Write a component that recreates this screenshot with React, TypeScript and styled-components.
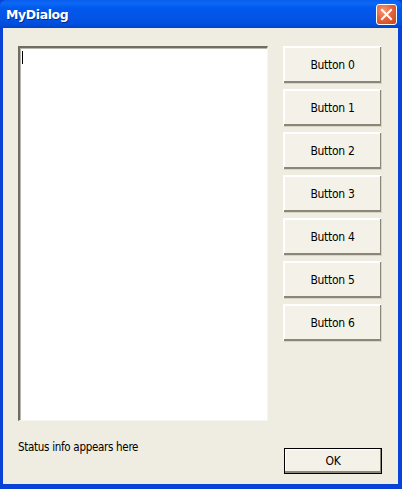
import React from "react";
import styled, { createGlobalStyle } from "styled-components";

const GlobalStyle = createGlobalStyle`
  html, body {
    margin: 0;
    padding: 0;
    background: #ffffff;
  }
  body {
    font-family: Tahoma, "DejaVu Sans", "Liberation Sans", sans-serif;
  }
`;

const Window = styled.div`
  width: 402px;
  height: 489px;
  display: flex;
  flex-direction: column;
  background: #0842d6;
  box-sizing: border-box;
`;

const TitleBar = styled.div`
  height: 28px;
  flex: none;
  display: flex;
  align-items: center;
  justify-content: space-between;
  padding: 0 5px 0 6px;
  box-sizing: border-box;
  background: linear-gradient(
    to bottom,
    #0a5cf0 0%,
    #0a6af4 12%,
    #0058ee 30%,
    #0454e6 60%,
    #0050df 85%,
    #0142c8 100%
  );
  border-radius: 6px 6px 0 0;
`;

const Title = styled.span`
  color: #ffffff;
  font-family: "DejaVu Sans", Verdana, sans-serif;
  font-weight: bold;
  font-size: 12.5px;
  letter-spacing: -0.4px;
  text-shadow: 1px 1px 0 #0a2a8a;
`;

const CloseButton = styled.div`
  width: 21px;
  height: 21px;
  box-sizing: border-box;
  border: 1px solid #ffffff;
  border-radius: 3px;
  background: radial-gradient(circle at 35% 30%, #f39a7c 0%, #e6643c 45%, #c9421c 100%);
  display: flex;
  align-items: center;
  justify-content: center;
`;

const Frame = styled.div`
  flex: 1;
  display: flex;
  padding: 0 4px 5px 3px;
  background: #0842d6;
`;

const Client = styled.div`
  flex: 1;
  background: #efece1;
  display: grid;
  grid-template-columns: 250px 99px;
  grid-template-rows: 375px 1fr;
  column-gap: 15px;
  padding: 18px 16px 0 15px;
`;

const TextArea = styled.div`
  box-sizing: border-box;
  background: #ffffff;
  border-top: 2px solid #6f6c62;
  border-left: 2px solid #6f6c62;
  border-right: 1px solid #f6f5f0;
  border-bottom: 1px solid #f6f5f0;
  box-shadow: inset 1px 1px 0 #b9b7ad;
  position: relative;
`;

const Caret = styled.div`
  position: absolute;
  left: 2px;
  top: 3px;
  width: 1px;
  height: 13px;
  background: #000000;
`;

const ButtonColumn = styled.div`
  display: flex;
  flex-direction: column;
  gap: 5px;
`;

const Button = styled.div<{ $default?: boolean }>`
  box-sizing: border-box;
  height: ${({ $default }) => ($default ? "26px" : "38px")};
  background: #f4f2e8;
  border: 1px solid ${({ $default }) => ($default ? "#000000" : "#d8d5c6")};
  border-top-color: ${({ $default }) => ($default ? "#000000" : "#ffffff")};
  border-left-color: ${({ $default }) => ($default ? "#000000" : "#ffffff")};
  box-shadow: inset -1px -2px 0 #8a8778, inset 1px 1px 0 #ffffff;
  display: flex;
  align-items: center;
  justify-content: center;
  font-family: Tahoma, "DejaVu Sans Condensed", "DejaVu Sans", sans-serif;
  font-size: 12px;
  color: #000000;
  letter-spacing: -0.3px;
`;

const Footer = styled.div`
  display: flex;
  align-items: flex-start;
  padding-top: 19px;
  font-family: Tahoma, "DejaVu Sans Condensed", "DejaVu Sans", sans-serif;
  font-size: 11.5px;
  letter-spacing: -0.3px;
  color: #000000;
`;

const FooterRight = styled.div`
  display: flex;
  align-items: flex-start;
  padding-top: 27px;
`;

const OkWrap = styled.div`
  width: 98px;
  margin-left: 1px;
`;

export default function App() {
  const labels = [0, 1, 2, 3, 4, 5, 6].map((n) => `Button ${n}`);
  return (
    <>
      <GlobalStyle />
      <Window>
        <TitleBar>
          <Title>MyDialog</Title>
          <CloseButton>
            <svg width="13" height="13" viewBox="0 0 13 13">
              <path d="M2 2 L11 11 M11 2 L2 11" stroke="#ffffff" strokeWidth="2" strokeLinecap="square" />
            </svg>
          </CloseButton>
        </TitleBar>
        <Frame>
          <Client>
            <TextArea>
              <Caret />
            </TextArea>
            <ButtonColumn>
              {labels.map((l) => (
                <Button key={l}>{l}</Button>
              ))}
            </ButtonColumn>
            <Footer>Status info appears here</Footer>
            <FooterRight>
              <OkWrap>
                <Button $default>OK</Button>
              </OkWrap>
            </FooterRight>
          </Client>
        </Frame>
      </Window>
    </>
  );
}
